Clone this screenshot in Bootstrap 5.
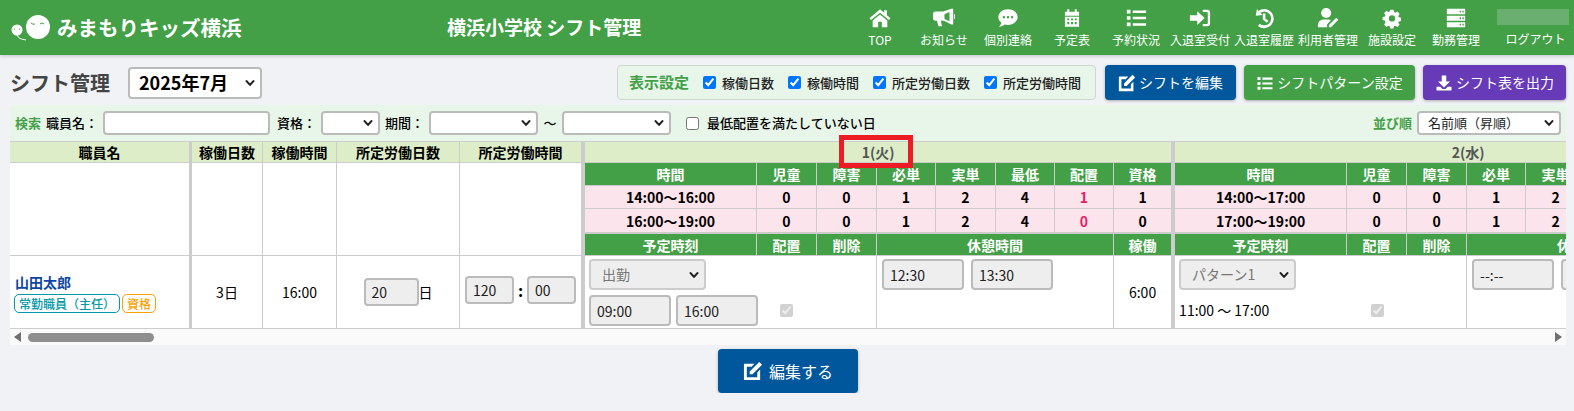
<!DOCTYPE html>
<html lang="ja">

<head>
  <meta charset="UTF-8">
  <meta name="viewport" content="width=device-width, initial-scale=1">
  <title>シフト管理</title>
  <link href="https://cdn.jsdelivr.net/npm/bootstrap@5.3.0/dist/css/bootstrap.min.css" rel="stylesheet">
  <style>
    body {
      background-color: #f0f2f5;
      color: #212121;
      font-family: "Noto Sans CJK JP", "Noto Sans", sans-serif;
      font-size: 14px;
      overflow: hidden;
    }

    /* header */
    .app-header {
      height: 55px;
      background-color: #43a047;
      color: #fff;
      box-shadow: 0 1px 4px rgba(0, 0, 0, 0.2);
    }

    .logo-area {
      width: 447px;
      padding-left: 11px;
    }

    .logo-text {
      font-size: 20.5px;
      font-weight: 700;
      line-height: 1;
      margin-left: 7px;
      white-space: nowrap;
    }

    .app-title {
      font-size: 19px;
      font-weight: 700;
    }

    .menu-link {
      width: 64px;
      height: 55px;
      padding-top: 7px;
      color: #fff;
      font-size: 12px;
      line-height: 17px;
      text-decoration: none;
      white-space: nowrap;
    }

    .menu-link svg {
      width: 22px;
      height: 22px;
      margin-bottom: 2px;
      fill: #fff;
    }

    .logout-area {
      width: 86px;
      height: 55px;
      padding-top: 9px;
      font-size: 12px;
      line-height: 17px;
    }

    .user-blur {
      width: 72px;
      height: 16px;
      margin-left: 4px;
      margin-bottom: 4px;
      background-color: #6aae70;
    }

    .logout-text {
      margin-left: 9px;
      margin-top: 1px;
    }

    /* toolbar */
    .page-body {
      padding: 10px 8px 0 10px;
    }

    .toolbar {
      height: 35px;
    }

    .page-title {
      font-size: 20px;
      font-weight: 700;
      color: #444;
      margin: 0;
      width: 118px;
    }

    .form-select {
      border: 2px solid #bbb;
      border-radius: 4px;
      background-image: url("data:image/svg+xml,%3csvg xmlns='http://www.w3.org/2000/svg' viewBox='0 0 16 16'%3e%3cpath fill='none' stroke='%23222' stroke-linecap='round' stroke-linejoin='round' stroke-width='3.4' d='m2.500 5 5.500 6 5.500-6'/%3e%3c/svg%3e");
      background-position: right 5px center;
      background-size: 10px 10px;
      padding-top: 0;
      padding-bottom: 0;
    }

    .month-select {
      width: 134px;
      height: 32px;
      font-size: 18px;
      font-weight: 700;
      color: #000;
      padding: 0 0 0 9px;
    }

    .setting-box {
      width: 479px;
      height: 35px;
      margin-right: 9px;
      padding-left: 11px;
      background-color: #e8f5e9;
      border: 1px solid #cfd8cf;
      border-radius: 4px;
      font-size: 13px;
      font-weight: 500;
    }

    .setting-title {
      color: #43a047;
      font-size: 15px;
      font-weight: 700;
      margin-right: 14px;
    }

    .native-check {
      width: 13px;
      height: 13px;
      margin: 0 6px 0 0;
      flex: none;
    }

    .setting-item {
      margin-right: 14px;
    }

    .action-btn {
      height: 35px;
      padding: 0;
      font-size: 14px;
      color: #fff;
      border: 0;
      border-radius: 4px;
      box-shadow: 0 1px 3px rgba(0, 0, 0, 0.3);
    }

    .action-btn:hover {
      color: #fff;
    }

    .action-btn svg {
      width: 18px;
      height: 18px;
      fill: #fff;
      margin-right: 3px;
    }

    .btn-navy {
      background-color: #01579b;
    }

    .btn-green {
      background-color: #43a047;
    }

    .btn-violet {
      background-color: #673ab7;
    }

    /* search */
    .search-bar {
      height: 36px;
      margin-top: 5px;
      padding: 0 5px;
      background-color: #e8f5e9;
      font-size: 13px;
      font-weight: 500;
      color: #000;
      white-space: nowrap;
    }

    .search-title {
      color: #43a047;
      font-weight: 700;
    }

    .search-input {
      height: 24px;
      border: 2px solid #bbb;
      border-radius: 4px;
      padding: 0 6px;
    }

    .search-bar .form-select {
      height: 24px;
      font-size: 13px;
    }

    /* table */
    .table-wrap {
      position: relative;
    }

    .table-scroll {
      overflow: hidden;
    }

    .shift-table {
      width: 1752px;
      table-layout: fixed;
      border-collapse: separate;
      border-spacing: 0;
      background-color: #fff;
      border-top: 1px solid #ccc;
      color: #000;
    }

    .shift-table th,
    .shift-table td {
      padding: 0;
      border-right: 1px solid #ccc;
      border-bottom: 1px solid #ccc;
      text-align: center;
      vertical-align: middle;
      font-size: 14px;
      line-height: 20px;
      white-space: nowrap;
    }

    .row-top {
      height: 20px;
    }

    .row-green,
    .row-pink {
      height: 23px;
    }

    .row-pink-end {
      height: 25px;
    }

    .row-green2 {
      height: 22px;
    }

    .row-data {
      height: 73px;
    }

    .shift-table .head-cell {
      background-color: #dcedc8;
      font-weight: 700;
    }

    .shift-table .day-cell {
      color: #555;
    }

    .shift-table .green-cell {
      background-color: #43a047;
      color: #fff;
      font-weight: 700;
    }

    .shift-table .pink-cell {
      background-color: #fce4ec;
      font-weight: 700;
    }

    .shift-table .pink-end {
      border-bottom-width: 2px;
    }

    .shift-table .name-col {
      border-right-width: 3px;
    }

    .shift-table .day-start {
      border-left: 3px solid #ccc;
    }

    .shift-table .top-cell {
      vertical-align: top;
      text-align: left;
    }

    .shift-table .name-cell {
      padding: 16px 0 0 4px;
      text-align: left;
      vertical-align: top;
    }

    .alert-num {
      color: #e91e63;
    }

    .staff-name {
      display: block;
      margin-left: 1px;
      margin-bottom: 1px;
      font-weight: 700;
      color: #0d47a1;
    }

    .staff-tag {
      display: inline-block;
      height: 19px;
      line-height: 17px;
      border: 1px solid currentColor;
      border-radius: 5px;
      font-size: 12px;
      font-weight: 500;
      text-align: center;
    }

    .tag-role {
      width: 106px;
      margin-right: 2px;
      color: #0097a7;
    }

    .tag-cert {
      width: 34px;
      color: #ffa000;
    }

    .cell-input {
      height: 31px;
      border: 2px solid #bbb;
      border-radius: 4px;
      background-color: #eee;
      color: #212121;
      padding: 0 6px;
      font-size: 14px;
      width: 82px;
    }

    .cell-input.short {
      height: 28px;
      width: 49px;
    }

    .cell-input.day-input {
      height: 28px;
      width: 55px;
    }

    .placement-select {
      width: 117px;
      height: 31px;
      margin: 3px 0 5px;
      padding-left: 11px;
      font-size: 14px;
      background-color: #eee;
      color: #777;
    }

    .shift-table .form-select:disabled {
      background-color: #eee;
      border-color: #ccc;
    }

    .time-row {
      padding-left: 4px;
    }

    .break-row {
      padding: 3px 0 0 5px;
    }

    .day2-time {
      width: 192px;
      height: 31px;
      line-height: 31px;
    }

    .colon-mark {
      margin: 0 4px;
      font-size: 16px;
    }

    /* scrollbar */
    .scroll-track {
      height: 16px;
      background-color: #fafafa;
      padding: 0 4px;
    }

    .scroll-arrow-left {
      border-style: solid;
      border-width: 5px 7px 5px 0;
      border-color: transparent #6f6f6f transparent transparent;
    }

    .scroll-arrow-right {
      border-style: solid;
      border-width: 5px 0 5px 7px;
      border-color: transparent transparent transparent #6f6f6f;
    }

    .scroll-thumb {
      width: 126px;
      height: 9px;
      margin-left: 7px;
      background-color: #8e8e8e;
      border-radius: 5px;
    }

    /* red marker over the day heading */
    .day-marker {
      position: absolute;
      top: -6px;
      left: 829px;
      width: 74px;
      height: 33px;
      border: 5px solid #ed1c24;
    }

    .save-btn {
      width: 140px;
      height: 44px;
      margin-top: 4px;
      background-color: #01579b;
      color: #fff;
      font-size: 16px;
      padding: 0;
      border: 0;
      border-radius: 4px;
      box-shadow: 0 1px 3px rgba(0, 0, 0, 0.3);
    }

    .save-btn svg {
      width: 20px;
      height: 20px;
      fill: #fff;
      margin-right: 6px;
    }
  </style>
</head>

<body>
  <header class="app-header d-flex align-items-center">
    <div class="logo-area d-flex align-items-center">
      <svg width="39" height="26" viewBox="0 0 39 26">
        <circle cx="27" cy="12" r="12" fill="#fff" />
        <circle cx="6" cy="15" r="5.500" fill="#fff" />
        <path d="M20 8q2 2 4 1M29 9q2-2 4 0" fill="none" stroke="#43a047" />
        <path d="M3 14h1M8 14h1" stroke="#43a047" />
        <path d="M6 20q1 4 9 5" fill="none" stroke="#fff" />
      </svg>
      <span class="logo-text">みまもりキッズ横浜</span>
    </div>
    <div class="app-title">横浜小学校 シフト管理</div>
    <nav class="d-flex ms-auto">
      <a class="menu-link d-flex flex-column align-items-center" href="#">
        <svg viewBox="0 0 24 24"><path d="M12 2.500 .5 12.300l1.700 2L12 6.200l9.800 8.100 1.700-2-4-3.400V3.500h-3v2.900z" /><path d="M12 8.200 4 14.800V22h6v-6h4v6h6v-7.200z" /></svg>
        TOP
      </a>
      <a class="menu-link d-flex flex-column align-items-center" href="#">
        <svg viewBox="0 0 24 24"><path fill-rule="evenodd" d="M20 2h2v17h-2l-8-4H8.500l1.300 6H6L4.300 15H3a3 3 0 0 1-3-3V8a3 3 0 0 1 3-3h8zm-2 3.500L12.500 8v5l5.500 2.500z" /><path d="M23 8a2.500 2.500 0 0 1 0 5z" /></svg>
        お知らせ
      </a>
      <a class="menu-link d-flex flex-column align-items-center" href="#">
        <svg viewBox="0 0 24 24"><path fill-rule="evenodd" d="M12 2.500c6 0 10.500 3.800 10.500 8.500S18 19.500 12 19.500c-1.200 0-2.400-.2-3.500-.5-1.600 1.200-3.800 2.300-6.500 2.500 1.500-1.500 2.600-3.200 2.800-4.400C2.800 15.700 1.500 13.500 1.500 11c0-4.700 4.500-8.500 10.500-8.500zM7.500 9.800a1.300 1.300 0 1 0 0 2.600 1.300 1.300 0 0 0 0-2.600zm4.500 0a1.300 1.300 0 1 0 0 2.600 1.300 1.300 0 0 0 0-2.600zm4.500 0a1.300 1.300 0 1 0 0 2.600 1.300 1.300 0 0 0 0-2.600z" /></svg>
        個別連絡
      </a>
      <a class="menu-link d-flex flex-column align-items-center" href="#">
        <svg viewBox="-2 0 28 24"><path fill-rule="evenodd" d="M6 1h2.500v3h7V1H18v3h3v5H3V4h3zM3 10.500h18V23H3zm3 2v2.500h2.500v-2.500zm4.700 0v2.500h2.600v-2.500zm4.800 0v2.500H18v-2.500zM6 17.200v2.800h2.500v-2.800zm4.700 0v2.800h2.600v-2.800zm4.800 0v2.800H18v-2.800z" /></svg>
        予定表
      </a>
      <a class="menu-link d-flex flex-column align-items-center" href="#">
        <svg viewBox="0 0 24 24"><path d="M2 3h4v4H2zM8.500 3.800H23v2.700H8.500zM2 10h4v4H2zM8.500 10.700H23v2.700H8.500zM2 17h4v4H2zM8.500 17.700H23v2.700H8.500z" /></svg>
        予約状況
      </a>
      <a class="menu-link d-flex flex-column align-items-center" href="#">
        <svg viewBox="0 0 24 24"><path d="M9 4.500 17 12l-8 7.500V15H1V9h8z" /><path d="M15 3h5a3 3 0 0 1 3 3v12a3 3 0 0 1-3 3h-5v-2.500h4.500a1 1 0 0 0 1-1V6.500a1 1 0 0 0-1-1H15z" /></svg>
        入退室受付
      </a>
      <a class="menu-link d-flex flex-column align-items-center" href="#">
        <svg viewBox="0 0 24 24"><path d="M4.300 2 3 9.500l7.500-.8-2.600-2.300A7.500 7.500 0 1 1 12 20a7.400 7.400 0 0 1-4.700-1.700l-1.900 2.400A10.500 10.500 0 1 0 5.800 4.300z" /><path d="M10.700 7h2.800v5.500l3.300 2.500-1.600 2.100-4.500-3.400z" /></svg>
        入退室履歴
      </a>
      <a class="menu-link d-flex flex-column align-items-center" href="#">
        <svg viewBox="0 0 24 24"><circle cx="10" cy="6.500" r="5.500" /><path d="M1 22v-2.500C1 16 4 13.500 7 13.500h5.500c1 0 2 .3 2.800.8L11 19v3z" /><path d="M13 22v-2.300L21 11.700l2.300 2.300-8 8z" /></svg>
        利用者管理
      </a>
      <a class="menu-link d-flex flex-column align-items-center" href="#">
        <svg viewBox="-2 -2 28 28"><path fill-rule="evenodd" d="M10 1.500h4l.6 3 1.700.8 2.700-1.500 2.700 3-1.700 2.500.6 1.700 2.900.7v4l-3 .7-.6 1.700 1.700 2.500-2.700 2.800-2.600-1.500-1.700.7-.8 2.800h-4l-.7-3-1.600-.6-2.600 1.600-2.800-2.800L3.700 17l-.7-1.600-3-.7v-4l3-.7.600-1.700-1.700-2.500 2.800-2.900 2.600 1.500 1.700-.7zM12 8.500a4 4 0 1 0 0 8 4 4 0 0 0 0-8z" /></svg>
        施設設定
      </a>
      <a class="menu-link d-flex flex-column align-items-center" href="#">
        <svg viewBox="0 0 24 24"><path fill-rule="evenodd" d="M2 2h20v6H2zm14 2v2h1.500V4zm3 0v2h1.500V4zM2 9.500h20v5.500H2zm14 1.800v2h1.500v-2zm3 0v2h1.500v-2zM2 16.500h20V22H2zm14 1.700v2h1.500v-2zm3 0v2h1.500v-2z" /></svg>
        勤務管理
      </a>
      <div class="logout-area d-flex flex-column align-items-center">
        <div class="user-blur"></div>
        <span class="logout-text">ログアウト</span>
      </div>
    </nav>
  </header>

  <main class="page-body">
    <div class="toolbar d-flex align-items-center">
      <h1 class="page-title">シフト管理</h1>
      <select class="form-select month-select">
        <option>2025年7月</option>
      </select>
      <div class="setting-box d-flex align-items-center ms-auto">
        <span class="setting-title">表示設定</span>
        <label class="setting-item d-flex align-items-center"><input type="checkbox" class="native-check" checked>稼働日数</label>
        <label class="setting-item d-flex align-items-center"><input type="checkbox" class="native-check" checked>稼働時間</label>
        <label class="setting-item d-flex align-items-center"><input type="checkbox" class="native-check" checked>所定労働日数</label>
        <label class="d-flex align-items-center"><input type="checkbox" class="native-check" checked>所定労働時間</label>
      </div>
      <button class="btn action-btn btn-navy d-flex align-items-center justify-content-center me-2" style="width:131px">
        <svg viewBox="2 1 21 21"><path d="M3 4h11l-3 3H6v11h11v-5l3-3v11H3z" /><path d="M9 12 19 2l3 3-10 10H9z" /></svg>シフトを編集
      </button>
      <button class="btn action-btn btn-green d-flex align-items-center justify-content-center me-2" style="width:171px">
        <svg viewBox="0 0 24 24"><path d="M2 4h4v4H2zM8.500 4.800H22v2.700H8.500zM2 10.500h4v4H2zM8.500 11.200H22v2.700H8.500zM2 17h4v4H2zM8.500 17.700H22v2.700H8.500z" /></svg>シフトパターン設定
      </button>
      <button class="btn action-btn btn-violet d-flex align-items-center justify-content-center" style="width:143px">
        <svg viewBox="0 0 24 24"><path d="M9 2h6v8h5l-8 8-8-8h5z" /><path d="M2 17h5l3 3h4l3-3h5v5H2z" /></svg>シフト表を出力
      </button>
    </div>

    <div class="search-bar d-flex align-items-center">
      <span class="search-title" style="margin-right:5px">検索</span>
      <span style="width:57px">職員名：</span>
      <input type="text" class="search-input" style="width:167px">
      <span style="margin-left:7px;width:44px">資格：</span>
      <select class="form-select" style="width:59px"></select>
      <span style="margin-left:5px;width:44px">期間：</span>
      <select class="form-select" style="width:109px"></select>
      <span class="text-center" style="width:24px">〜</span>
      <select class="form-select" style="width:109px"></select>
      <input type="checkbox" class="native-check" style="margin-left:15px;margin-right:8px">
      <span>最低配置を満たしていない日</span>
      <span class="search-title ms-auto" style="margin-right:5px">並び順</span>
      <select class="form-select" style="width:144px;padding-left:9px">
        <option>名前順（昇順）</option>
      </select>
    </div>

    <div class="table-wrap">
      <div class="table-scroll">
        <table class="shift-table">
          <colgroup>
            <col style="width:182px">
            <col style="width:71px">
            <col style="width:74px">
            <col style="width:123px">
            <col style="width:122px">
            <col style="width:175px"><col style="width:60px"><col style="width:60px"><col style="width:59px"><col style="width:60px"><col style="width:59px"><col style="width:59px"><col style="width:58px">
            <col style="width:175px"><col style="width:60px"><col style="width:60px"><col style="width:59px"><col style="width:60px"><col style="width:59px"><col style="width:59px"><col style="width:58px">
          </colgroup>
          <tbody>
            <tr class="row-top">
              <th class="head-cell name-col">職員名</th>
              <th class="head-cell">稼働日数</th>
              <th class="head-cell">稼働時間</th>
              <th class="head-cell">所定労働日数</th>
              <th class="head-cell">所定労働時間</th>
              <th class="head-cell day-cell day-start" colspan="8">1(火)</th>
              <th class="head-cell day-cell day-start" colspan="8">2(水)</th>
            </tr>
            <tr class="row-green">
              <td class="name-col" rowspan="4"></td>
              <td rowspan="4"></td>
              <td rowspan="4"></td>
              <td rowspan="4"></td>
              <td rowspan="4"></td>
              <th class="green-cell day-start">時間</th>
              <th class="green-cell">児童</th>
              <th class="green-cell">障害</th>
              <th class="green-cell">必単</th>
              <th class="green-cell">実単</th>
              <th class="green-cell">最低</th>
              <th class="green-cell">配置</th>
              <th class="green-cell">資格</th>
              <th class="green-cell day-start">時間</th>
              <th class="green-cell">児童</th>
              <th class="green-cell">障害</th>
              <th class="green-cell">必単</th>
              <th class="green-cell">実単</th>
              <th class="green-cell"></th>
              <th class="green-cell"></th>
              <th class="green-cell"></th>
            </tr>
            <tr class="row-pink">
              <td class="pink-cell day-start">14:00〜16:00</td>
              <td class="pink-cell">0</td>
              <td class="pink-cell">0</td>
              <td class="pink-cell">1</td>
              <td class="pink-cell">2</td>
              <td class="pink-cell">4</td>
              <td class="pink-cell alert-num">1</td>
              <td class="pink-cell">1</td>
              <td class="pink-cell day-start">14:00〜17:00</td>
              <td class="pink-cell">0</td>
              <td class="pink-cell">0</td>
              <td class="pink-cell">1</td>
              <td class="pink-cell">2</td>
              <td class="pink-cell"></td>
              <td class="pink-cell"></td>
              <td class="pink-cell"></td>
            </tr>
            <tr class="row-pink-end">
              <td class="pink-cell pink-end day-start">16:00〜19:00</td>
              <td class="pink-cell pink-end">0</td>
              <td class="pink-cell pink-end">0</td>
              <td class="pink-cell pink-end">1</td>
              <td class="pink-cell pink-end">2</td>
              <td class="pink-cell pink-end">4</td>
              <td class="pink-cell pink-end alert-num">0</td>
              <td class="pink-cell pink-end">0</td>
              <td class="pink-cell pink-end day-start">17:00〜19:00</td>
              <td class="pink-cell pink-end">0</td>
              <td class="pink-cell pink-end">0</td>
              <td class="pink-cell pink-end">1</td>
              <td class="pink-cell pink-end">2</td>
              <td class="pink-cell pink-end"></td>
              <td class="pink-cell pink-end"></td>
              <td class="pink-cell pink-end"></td>
            </tr>
            <tr class="row-green2">
              <th class="green-cell day-start">予定時刻</th>
              <th class="green-cell">配置</th>
              <th class="green-cell">削除</th>
              <th class="green-cell" colspan="4">休憩時間</th>
              <th class="green-cell">稼働</th>
              <th class="green-cell day-start">予定時刻</th>
              <th class="green-cell">配置</th>
              <th class="green-cell">削除</th>
              <th class="green-cell" colspan="4">休憩時間</th>
              <th class="green-cell">稼働</th>
            </tr>
            <tr class="row-data">
              <td class="name-col name-cell">
                <a class="staff-name text-decoration-none" href="#">山田太郎</a>
                <span class="staff-tag tag-role">常勤職員（主任）</span><span class="staff-tag tag-cert">資格</span>
              </td>
              <td>3日</td>
              <td>16:00</td>
              <td>
                <div class="d-flex align-items-center justify-content-center">
                  <input type="text" class="cell-input day-input" value="20" disabled>日
                </div>
              </td>
              <td>
                <div class="d-flex align-items-center justify-content-center pb-1">
                  <input type="text" class="cell-input short" value="120" disabled>
                  <b class="colon-mark">:</b>
                  <input type="text" class="cell-input short" value="00" disabled>
                </div>
              </td>
              <td class="day-start top-cell" colspan="3">
                <div class="time-row">
                  <select class="form-select placement-select" disabled>
                    <option>出勤</option>
                  </select>
                  <div class="d-flex align-items-center">
                    <input type="text" class="cell-input" value="09:00" disabled>
                    <input type="text" class="cell-input" style="margin-left:5px" value="16:00" disabled>
                    <input type="checkbox" class="native-check" style="margin-left:22px" checked disabled>
                  </div>
                </div>
              </td>
              <td class="top-cell" colspan="4">
                <div class="break-row d-flex">
                  <input type="text" class="cell-input" value="12:30" disabled>
                  <input type="text" class="cell-input" style="margin-left:7px" value="13:30" disabled>
                </div>
              </td>
              <td>6:00</td>
              <td class="day-start top-cell" colspan="3">
                <div class="time-row">
                  <select class="form-select placement-select" disabled>
                    <option>パターン1</option>
                  </select>
                  <div class="d-flex align-items-center">
                    <span class="day2-time">11:00 〜 17:00</span>
                    <input type="checkbox" class="native-check" checked disabled>
                  </div>
                </div>
              </td>
              <td class="top-cell" colspan="4">
                <div class="break-row d-flex">
                  <input type="text" class="cell-input" value="--:--" disabled>
                  <input type="text" class="cell-input" style="margin-left:7px" value="--:--" disabled>
                </div>
              </td>
              <td></td>
            </tr>
          </tbody>
        </table>
      </div>
      <div class="scroll-track d-flex align-items-center">
        <span class="scroll-arrow-left"></span>
        <span class="scroll-thumb"></span>
        <span class="scroll-arrow-right ms-auto"></span>
      </div>
      <div class="day-marker"></div>
    </div>

    <div class="text-center">
      <button class="btn save-btn d-inline-flex align-items-center justify-content-center">
        <svg viewBox="2 1 21 21"><path d="M3 4h11l-3 3H6v11h11v-5l3-3v11H3z" /><path d="M9 12 19 2l3 3-10 10H9z" /></svg>編集する
      </button>
    </div>
  </main>

  <script src="https://cdn.jsdelivr.net/npm/bootstrap@5.3.0/dist/js/bootstrap.bundle.min.js"></script>
</body>

</html>
